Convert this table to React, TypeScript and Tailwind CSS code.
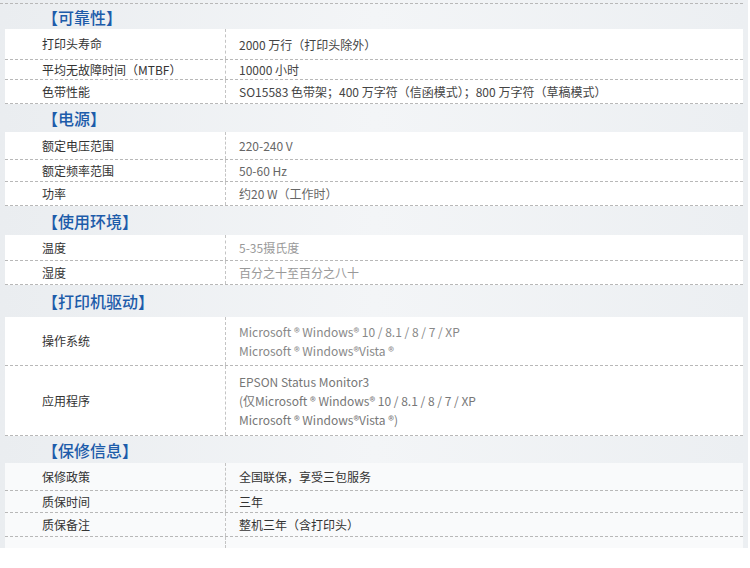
type Row = { label: string; value: string[]; h: number; tone: string };
type Section = { title: string; headH: number; rows: Row[]; tail?: number; bg?: string };

const sections: Section[] = [
  {
    title: "【可靠性】",
    headH: 25,
    rows: [
      { label: "打印头寿命", value: ["2000 万行（打印头除外）"], h: 31, tone: "text-[#444]" },
      { label: "平均无故障时间（MTBF）", value: ["10000 小时"], h: 20, tone: "text-[#444]" },
      { label: "色带性能", value: ["SO15583 色带架；400 万字符（信函模式）；800 万字符（草稿模式）"], h: 24, tone: "text-[#444]" },
    ],
  },
  {
    title: "【电源】",
    headH: 28,
    rows: [
      { label: "额定电压范围", value: ["220-240 V"], h: 28, tone: "text-[#666]" },
      { label: "额定频率范围", value: ["50-60 Hz"], h: 22, tone: "text-[#666]" },
      { label: "功率", value: ["约20 W（工作时）"], h: 24, tone: "text-[#666]" },
    ],
  },
  {
    title: "【使用环境】",
    headH: 29,
    rows: [
      { label: "温度", value: ["5-35摄氏度"], h: 26, tone: "text-[#999]" },
      { label: "湿度", value: ["百分之十至百分之八十"], h: 24, tone: "text-[#999]" },
    ],
  },
  {
    title: "【打印机驱动】",
    headH: 32,
    rows: [
      {
        label: "操作系统",
        value: ["Microsoft ® Windows® 10 / 8.1 / 8 / 7 / XP", "Microsoft ® Windows®Vista ®"],
        h: 49,
        tone: "text-[#888]",
      },
      {
        label: "应用程序",
        value: ["EPSON Status Monitor3", "(仅Microsoft ® Windows® 10 / 8.1 / 8 / 7 / XP", "Microsoft ® Windows®Vista ®)"],
        h: 70,
        tone: "text-[#777]",
      },
    ],
  },
  {
    title: "【保修信息】",
    headH: 27,
    bg: "bg-[#f9fafb]",
    tail: 11,
    rows: [
      { label: "保修政策", value: ["全国联保，享受三包服务"], h: 28, tone: "text-[#333]" },
      { label: "质保时间", value: ["三年"], h: 22, tone: "text-[#333]" },
      { label: "质保备注", value: ["整机三年（含打印头）"], h: 24, tone: "text-[#333]" },
    ],
  },
];

function SpecRow({ row, bg }: { row: Row; bg: string }) {
  return (
    <div
      className={`flex border-b border-dashed border-[#b8b8b8] ${bg}`}
      style={{ height: row.h }}
    >
      <div className="w-[221px] shrink-0 flex items-center pl-[37px] border-r border-dashed border-[#c4c4c4] text-[12px] text-[#333]">
        {row.label}
      </div>
      <div className={`flex-1 flex flex-col justify-center pl-[13px] text-[12px] leading-[19px] ${row.tone}`}>
        {row.value.map((v) => (
          <div key={v}>{v}</div>
        ))}
      </div>
    </div>
  );
}

export default function App() {
  return (
    <div
      className="w-[750px] h-[568px] bg-white"
      style={{ fontFamily: '"Noto Sans CJK SC", "Noto Sans", sans-serif' }}
    >
      <div className="w-[748px] bg-gradient-to-r from-[#eaedf0] via-[#f3f5f7] to-[#eceff2]">
        <div className="h-[4px] border-b border-dashed border-[#b8b8b8] mr-[5px]" />
        {sections.map((s) => (
          <div key={s.title}>
            <div
              className="flex items-center pl-[42px] text-[16px] font-medium text-[#1d5caa]"
              style={{ height: s.headH }}
            >
              {s.title}
            </div>
            <div className="mx-[5px]">
              {s.rows.map((r) => (
                <SpecRow key={r.label} row={r} bg={s.bg ?? "bg-white"} />
              ))}
              {s.tail ? (
                <div className={`flex ${s.bg}`} style={{ height: s.tail }}>
                  <div className="w-[221px] border-r border-dashed border-[#c4c4c4]" />
                </div>
              ) : null}
            </div>
          </div>
        ))}
      </div>
    </div>
  );
}
